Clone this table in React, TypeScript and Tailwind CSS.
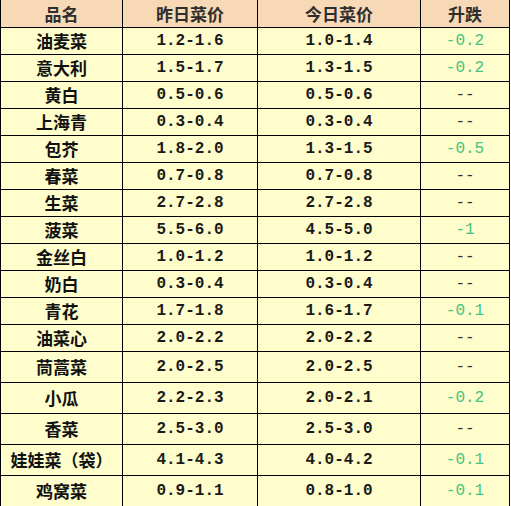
import React from "react";

type Row = { name: string; yesterday: string; today: string; change: string; tall?: boolean };

const rows: Row[] = [
  { name: "油麦菜", yesterday: "1.2-1.6", today: "1.0-1.4", change: "-0.2" },
  { name: "意大利", yesterday: "1.5-1.7", today: "1.3-1.5", change: "-0.2" },
  { name: "黄白", yesterday: "0.5-0.6", today: "0.5-0.6", change: "--" },
  { name: "上海青", yesterday: "0.3-0.4", today: "0.3-0.4", change: "--" },
  { name: "包芥", yesterday: "1.8-2.0", today: "1.3-1.5", change: "-0.5" },
  { name: "春菜", yesterday: "0.7-0.8", today: "0.7-0.8", change: "--" },
  { name: "生菜", yesterday: "2.7-2.8", today: "2.7-2.8", change: "--" },
  { name: "菠菜", yesterday: "5.5-6.0", today: "4.5-5.0", change: "-1" },
  { name: "金丝白", yesterday: "1.0-1.2", today: "1.0-1.2", change: "--" },
  { name: "奶白", yesterday: "0.3-0.4", today: "0.3-0.4", change: "--" },
  { name: "青花", yesterday: "1.7-1.8", today: "1.6-1.7", change: "-0.1" },
  { name: "油菜心", yesterday: "2.0-2.2", today: "2.0-2.2", change: "--" },
  { name: "茼蒿菜", yesterday: "2.0-2.5", today: "2.0-2.5", change: "--", tall: true },
  { name: "小瓜", yesterday: "2.2-2.3", today: "2.0-2.1", change: "-0.2", tall: true },
  { name: "香菜", yesterday: "2.5-3.0", today: "2.5-3.0", change: "--", tall: true },
  { name: "娃娃菜（袋）", yesterday: "4.1-4.3", today: "4.0-4.2", change: "-0.1", tall: true },
  { name: "鸡窝菜", yesterday: "0.9-1.1", today: "0.8-1.0", change: "-0.1", tall: true },
];

const cjk = "font-['Noto_Sans_CJK_SC',sans-serif]";
const mono = "font-['Liberation_Mono','Noto_Sans_CJK_SC',monospace]";

export default function App() {
  return (
    <div className="w-[511px] h-[506px] bg-white overflow-hidden">
      <table className="w-[509px] table-fixed border-collapse text-center">
        <colgroup>
          <col className="w-[122px]" />
          <col className="w-[135px]" />
          <col className="w-[163px]" />
          <col className="w-[89px]" />
        </colgroup>
        <thead>
          <tr className="h-[27px] bg-[#f8d9b6]">
            {["品名", "昨日菜价", "今日菜价", "升跌"].map((h) => (
              <th
                key={h}
                className={`border border-t-0 border-black p-0 text-[17px] font-bold leading-none text-[#2e2e2e] ${cjk}`}
              >
                {h}
              </th>
            ))}
          </tr>
        </thead>
        <tbody className="bg-[#fefdcb]">
          {rows.map((r) => (
            <tr key={r.name} className={r.tall ? "h-[31px]" : "h-[27px]"}>
              <td className={`border border-black p-0 text-[17px] font-bold leading-none text-[#111] ${cjk}`}>
                {r.name}
              </td>
              <td className={`border border-black p-0 text-[16px] font-bold leading-none text-[#1a1a1a] ${mono}`}>
                {r.yesterday}
              </td>
              <td className={`border border-black p-0 text-[16px] font-bold leading-none text-[#1a1a1a] ${mono}`}>
                {r.today}
              </td>
              <td
                className={`border border-black p-0 text-[16px] leading-none ${mono} ${
                  r.change === "--" ? "text-[#333]" : "text-[#45c284]"
                }`}
              >
                {r.change}
              </td>
            </tr>
          ))}
        </tbody>
      </table>
    </div>
  );
}
